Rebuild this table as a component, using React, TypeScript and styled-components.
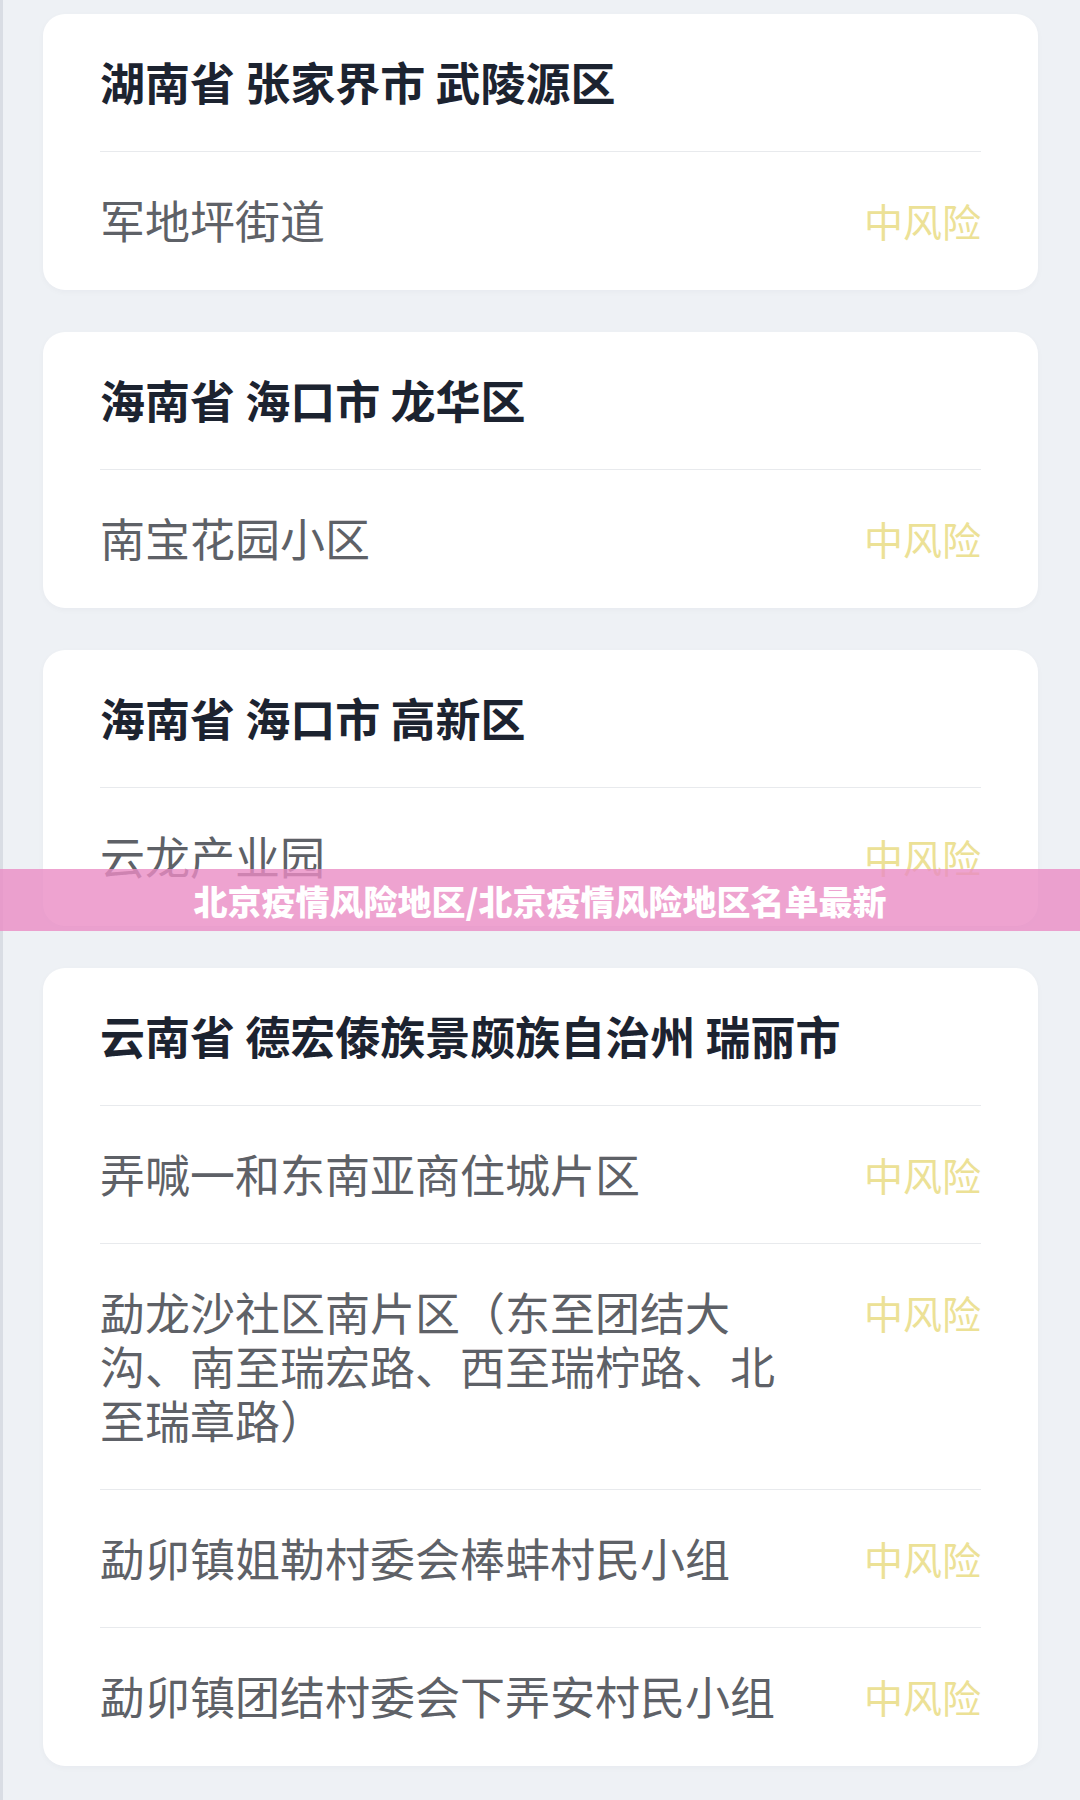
import React from 'react';
import styled, { createGlobalStyle } from 'styled-components';

const GlobalStyle = createGlobalStyle`
  body {
    margin: 0;
    background: #eef1f5;
    font-family: "Noto Sans CJK SC", "Noto Sans", sans-serif;
  }
`;

const Page = styled.div`
  position: relative;
  min-height: 1800px;
  box-sizing: border-box;
  border-left: 3px solid #d9dde4;
  padding: 14px 42px 35px 40px;
  display: flex;
  flex-direction: column;
  gap: 42px;
`;

const Card = styled.div`
  background: #ffffff;
  border-radius: 22px;
  box-shadow: 0 2px 6px rgba(30, 40, 60, 0.03);
  padding: 0 57px 1px;
`;

const Title = styled.h2`
  margin: 0;
  padding: 41px 0 42px;
  font-size: 45px;
  line-height: 54px;
  font-weight: 700;
  color: #1c2330;
  border-bottom: 1px solid #e8eaed;
`;

const Row = styled.div`
  display: flex;
  justify-content: space-between;
  align-items: flex-start;
  padding: 41px 0 42px;
  & + & {
    border-top: 1px solid #e8eaed;
  }
`;

const Place = styled.div`
  max-width: 700px;
  font-size: 45px;
  line-height: 54px;
  color: #5e6167;
`;

const Risk = styled.div`
  flex-shrink: 0;
  font-size: 39px;
  line-height: 54px;
  color: #ece196;
`;

// watermark strip laid over the list
const Banner = styled.div`
  position: absolute;
  top: 869px;
  left: -3px;
  right: 0;
  height: 62px;
  display: flex;
  align-items: center;
  justify-content: center;
  background: rgba(234, 140, 196, 0.8);
  color: #ffffff;
  font-size: 34px;
  font-weight: 900;
`;

interface Area {
  title: string;
  places: string[];
}

const areas: Area[] = [
  { title: '湖南省 张家界市 武陵源区', places: ['军地坪街道'] },
  { title: '海南省 海口市 龙华区', places: ['南宝花园小区'] },
  { title: '海南省 海口市 高新区', places: ['云龙产业园'] },
  {
    title: '云南省 德宏傣族景颇族自治州 瑞丽市',
    places: [
      '弄喊一和东南亚商住城片区',
      '勐龙沙社区南片区（东至团结大沟、南至瑞宏路、西至瑞柠路、北至瑞章路）',
      '勐卯镇姐勒村委会棒蚌村民小组',
      '勐卯镇团结村委会下弄安村民小组',
    ],
  },
];

const App: React.FC = () => {
  return (
    <>
      <GlobalStyle />
      <Page>
        {areas.map((a) => (
          <Card key={a.title}>
            <Title>{a.title}</Title>
            {a.places.map((p) => (
              <Row key={p}>
                <Place>{p}</Place>
                <Risk>中风险</Risk>
              </Row>
            ))}
          </Card>
        ))}
        <Banner>北京疫情风险地区/北京疫情风险地区名单最新</Banner>
      </Page>
    </>
  );
};

export default App;
